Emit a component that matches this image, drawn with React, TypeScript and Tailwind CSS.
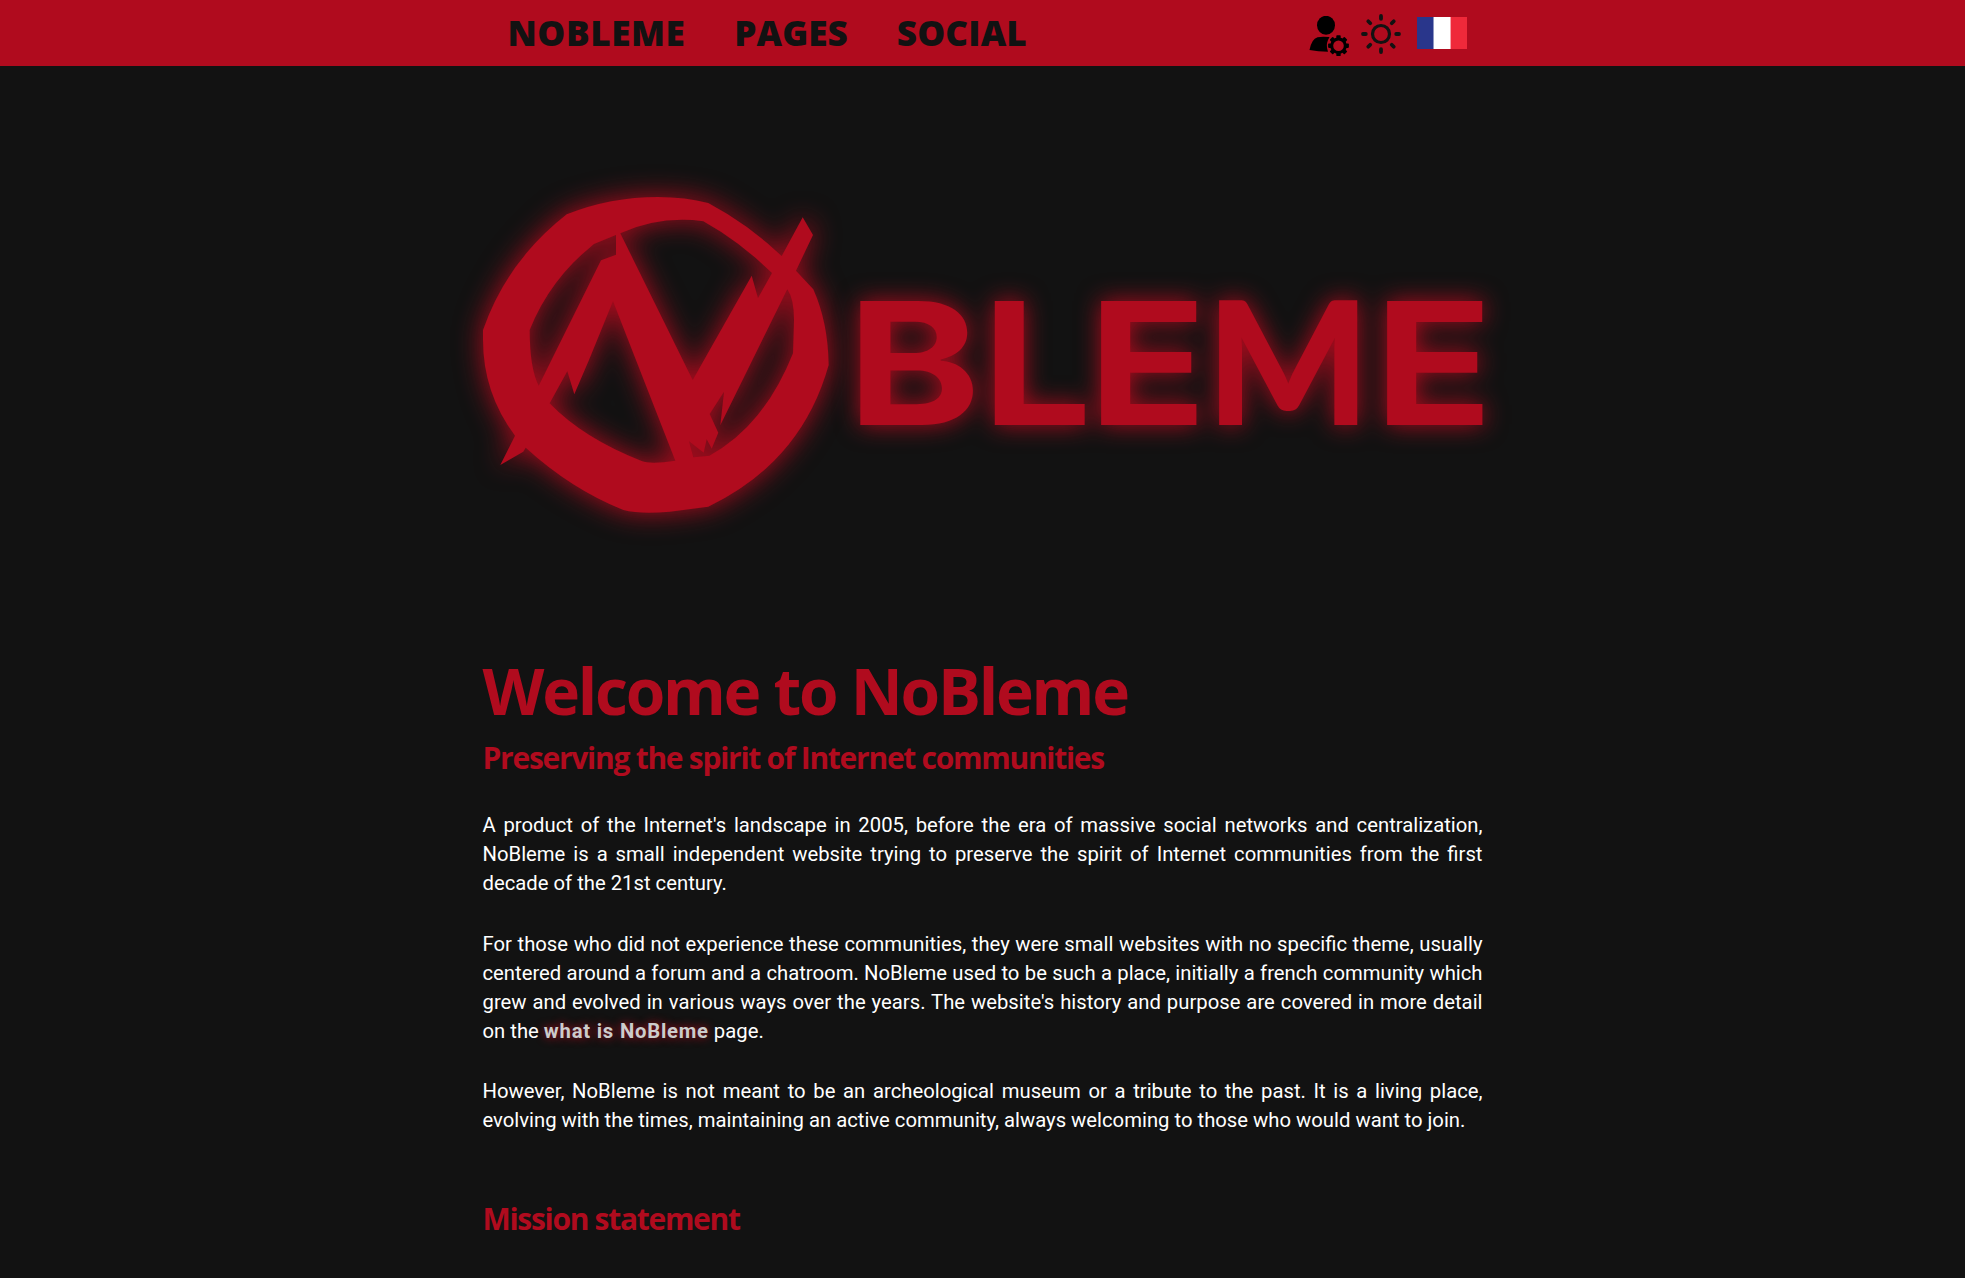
const EMBLEM =
  'M483 330 Q507 261 566.7 214.3 Q610 197 658 197 Q686 197 708.3 203 Q748 224 781.7 256 L802.7 217.3 L813 235 L796 270.7 L813.3 289.3 Q828 322 828.7 365 Q801.5 462 708.3 506.7 L670 511.7 Q640 514.5 623.3 510 Q571 489 525.7 447.7 L523.3 451.7 L500.3 465 L515 435.7 Q483 393 483 340 Z' +
  'M594 244 L616 235 V254.7 L601 260.3 L538.7 385.7 Q529.7 368 529.7 330 Q550 279 594 244 Z' +
  'M620.3 233.3 Q660 215.5 703.3 221.3 Q739 241 772 273 L758 298 L751.7 275.7 L692.7 380 Z' +
  'M613 301.3 L675.3 460.7 Q651 464.5 641.7 461 Q583 438 549.7 403.3 L567.3 371.3 L574.3 394.3 L589 360 Z' +
  'M787.3 289.3 Q794 299 794 320 L793 353.3 Q764 426 709.3 455.7 L693.3 457.3 L689 441.3 L703.7 452.7 L706.7 439.3 L711.7 448.7 L718.3 432.7 L709.7 414 L724 391.7 L720.3 425.3 Z';

const WORDMARK = [
  { char: 'B', transform: 'translate(846.9 425) scale(1.186 1)', font: 'Inter, sans-serif', size: 170.5, weight: 700 },
  { char: 'L', transform: 'translate(982.1 425) scale(1.139 1)', font: 'Inter, sans-serif', size: 170.5, weight: 700 },
  { char: 'E', transform: 'translate(1088.3 425) scale(1.146 1)', font: 'Inter, sans-serif', size: 170.5, weight: 700 },
  { char: 'M', transform: 'translate(1206 425) scale(1.007 1)', font: 'Lato, sans-serif', size: 171.4, weight: 900 },
  { char: 'E', transform: 'translate(1374.3 425) scale(1.146 1)', font: 'Inter, sans-serif', size: 170.5, weight: 700 },
];

function Logo() {
  return (
    <svg
      className="block h-[350px] w-[1000px] overflow-visible fill-[#b00b1e]"
      viewBox="483 178 1000 350"
      aria-label="NoBleme"
    >
      <g className="drop-shadow-[0_0_14px_#b00b1e]">
        <path d={EMBLEM} fillRule="evenodd" />
      </g>
      <g className="drop-shadow-[0_0_12px_#b00b1e]">
        {WORDMARK.map((l, i) => (
          <text key={i} transform={l.transform} fontFamily={l.font} fontWeight={l.weight} fontSize={l.size}>
            {l.char}
          </text>
        ))}
      </g>
    </svg>
  );
}

function UserGearIcon() {
  const teeth = [0, 45, 90, 135, 180, 225, 270, 315];
  return (
    <svg className="h-10 w-10" viewBox="0 0 40 40" fill="#000">
      <ellipse cx="17" cy="9.3" rx="9" ry="9.5" />
      <path d="M8.5 21.2 Q12 20.5 20.5 21 Q17 27 18 32 L19 35.8 Q9 35.6 0.5 34 Q2.5 23 8.5 21.2Z" />
      <circle cx="29.5" cy="29.7" r="6.8" fill="none" stroke="#000" strokeWidth="3" />
      {teeth.map((a) => (
        <rect key={a} x="27.3" y="19.3" width="4.4" height="4" rx="0.8" transform={`rotate(${a} 29.5 29.7)`} />
      ))}
    </svg>
  );
}

function SunIcon() {
  const rays = [0, 45, 90, 135, 180, 225, 270, 315];
  return (
    <svg className="h-10 w-10" viewBox="0 0 40 40" fill="none" stroke="#121212" strokeWidth="3.8" strokeLinecap="round">
      <circle cx="20" cy="20" r="8.5" strokeWidth="3.2" />
      {rays.map((a) => (
        <path key={a} d="M20 2 V4.8" transform={`rotate(${a} 20 20)`} />
      ))}
    </svg>
  );
}

function FrenchFlag() {
  return (
    <div className="flex h-8 w-[50px]">
      <div className="w-4 bg-[#29368b]" />
      <div className="w-px bg-[#9097c2]" />
      <div className="w-4 bg-white" />
      <div className="w-px bg-[#f7a3aa]" />
      <div className="flex-1 bg-[#ef293a]" />
    </div>
  );
}

export default function App() {
  return (
    <div className="h-[1278px] overflow-hidden bg-[#121212] font-['Roboto',sans-serif] text-white">
      <header className="h-[66px] bg-[#b00b1e]">
        <div className="mx-auto flex h-full w-[1000px] items-start justify-between pr-4 pl-[25px]">
          <nav className="flex gap-[49px] pt-[15px] font-['Open_Sans',sans-serif] text-[35.2px] leading-[35px] font-extrabold text-[#121212]">
            <a className="tracking-[0.52px]">NOBLEME</a>
            <a>PAGES</a>
            <a className="tracking-[0.1px]">SOCIAL</a>
          </nav>
          <div className="flex items-start">
            <div className="pt-4">
              <UserGearIcon />
            </div>
            <div className="ml-[12px] pt-[14px]">
              <SunIcon />
            </div>
            <div className="ml-4 pt-[17px]">
              <FrenchFlag />
            </div>
          </div>
        </div>
      </header>

      <main className="mx-auto w-[1000px]">
        <div className="pt-28">
          <Logo />
        </div>

        <h1 className="mt-[131px] font-['Open_Sans',sans-serif] text-[64px] leading-[64px] font-bold tracking-[-2.25px] text-[#b00b1e]">
          Welcome to NoBleme
        </h1>
        <h2 className="mt-[20px] font-['Open_Sans',sans-serif] text-[30px] leading-[30px] font-bold tracking-[-1.27px] text-[#b00b1e]">
          Preserving the spirit of Internet communities
        </h2>

        <div className="mt-[38px] text-justify text-[20.27px] leading-[29px]">
          <p>
            A product of the Internet's landscape in 2005, before the era of massive social networks and centralization,
            NoBleme is a small independent website trying to preserve the spirit of Internet communities from the first
            decade of the 21st century.
          </p>
          <p className="mt-8">
            For those who did not experience these communities, they were small websites with no specific theme, usually
            centered around a forum and a chatroom. NoBleme used to be such a place, initially a french community which
            grew and evolved in various ways over the years. The website's history and purpose are covered in more detail
            on the{' '}
            <a className="font-bold tracking-[0.78px] text-[#cccccc] [text-shadow:0_0_10px_#b00b1e]">what is NoBleme</a>{' '}
            page.
          </p>
          <p className="mt-[31px]">
            However, NoBleme is not meant to be an archeological museum or a tribute to the past. It is a living place,
            evolving with the times, maintaining an active community, always welcoming to those who would want to join.
          </p>
        </div>

        <h2 className="mt-[69px] font-['Open_Sans',sans-serif] text-[30px] leading-[30px] font-bold tracking-[-1.3px] text-[#b00b1e]">
          Mission statement
        </h2>
      </main>
    </div>
  );
}
